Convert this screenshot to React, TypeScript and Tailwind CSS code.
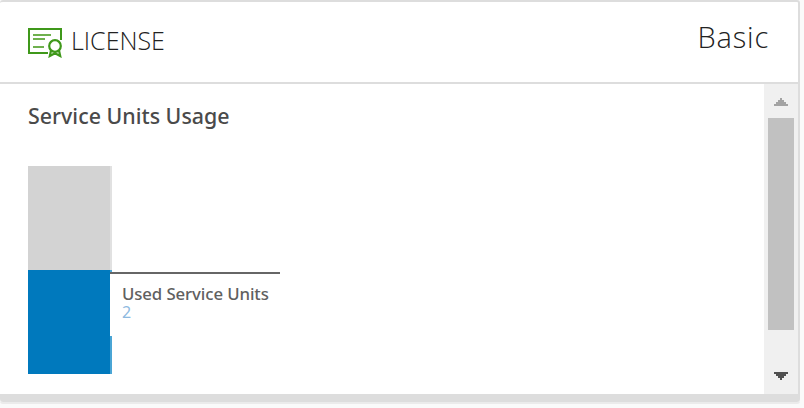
function LicenseIcon() {
  return (
    <svg width="36" height="30" viewBox="0 0 36 30" fill="none" className="shrink-0" stroke="#3f981a" strokeWidth="2">
      <path d="M20 25H1V1H33V12" />
      <path d="M5 7H23M5 11H17M5 19H16" stroke="#6fb04e" />
      <circle cx="27" cy="18" r="5.8" strokeWidth="2.2" />
      <path d="M23 22.5L21.8 28L27 25.2L32.2 28L31 22.5" strokeWidth="2.2" />
    </svg>
  );
}

export default function App() {
  return (
    <div className="h-[408px] w-[804px] bg-[#fafafa] font-['Noto_Sans',sans-serif]">
      <div className="h-[404px] w-[800px] rounded-[3px] border-b-2 border-[#ebebeb]">
        <section className="flex h-[402px] w-[800px] flex-col rounded-[3px] border-t-2 border-r-2 border-b-8 border-[#ddd] bg-white">
          <header className="flex h-[82px] shrink-0 items-start justify-between border-b-2 border-[#ddd] pr-[30px] pl-7">
            <div className="flex pt-[26px]">
              <LicenseIcon />
              <h1 className="-mt-[3px] ml-[7px] font-['Open_Sans',sans-serif] text-[25px] leading-[30px] font-light whitespace-nowrap text-[#222]">LICENSE</h1>
            </div>
            <span className="-mr-px pt-[17px] font-['Open_Sans',sans-serif] text-[29px] leading-[36px] font-light tracking-[0.8px] text-[#222]">Basic</span>
          </header>
          <div className="flex min-h-0 flex-1">
            <main className="flex-1 pt-[16px] pl-7">
              <h2 className="h-8 text-[21.4px] leading-8 font-medium whitespace-nowrap text-[#4a4a4a]">Service Units Usage</h2>
              <div className="mt-[34px] flex">
                <div className="w-[82px]">
                  <div className="h-[104px] bg-[#d3d3d3]" />
                  <div className="h-[104px] bg-[#0079bd]" />
                </div>
                <div className="w-[2px]">
                  <div className="h-[104px] bg-[#e1e1e1]" />
                  <div className="h-[2px] bg-[#4aa5d5]" />
                  <div className="h-[2px] bg-[#666]" />
                  <div className="mt-[62px] h-[38px] bg-[#4aa5d5]" />
                </div>
                <div className="mt-[106px] w-[168px] border-t-2 border-[#666] pt-[10px] pl-[10px]">
                  <div className="text-[16.8px] leading-[20px] font-medium tracking-[-0.1px] whitespace-nowrap text-[#606060]">Used Service Units</div>
                  <div className="text-[16px] leading-[16px] text-[#8db9df]">2</div>
                </div>
              </div>
            </main>
            <aside className="flex w-[34px] flex-col items-center bg-[#f0f0f0] pt-[14px]">
              <svg width="14" height="8" viewBox="0 0 14 8" shapeRendering="crispEdges" fill="#a3a3a3">
                <path d="M6 0H8V2H10V4H12V6H14V8H0V6H2V4H4V2H6Z" />
              </svg>
              <div className="mt-[12px] h-[212px] w-[26px] bg-[#c1c1c1]" />
              <svg className="mt-[42px]" width="14" height="8" viewBox="0 0 14 8" shapeRendering="crispEdges" fill="#505050">
                <path d="M0 0H14V2H12V4H10V6H8V8H6V6H4V4H2V2H0Z" />
              </svg>
            </aside>
          </div>
        </section>
      </div>
    </div>
  );
}
